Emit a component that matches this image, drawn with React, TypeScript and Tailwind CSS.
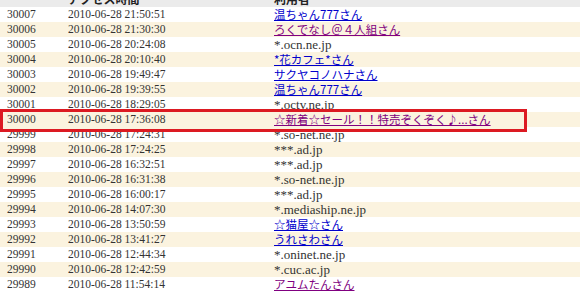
const rows: { id: string; at: string; who: string; link?: "new" | "seen" }[] = [
  { id: "30007", at: "2010-06-28 21:50:51", who: "温ちゃん777さん", link: "new" },
  { id: "30006", at: "2010-06-28 21:30:30", who: "ろくでなし＠４人組さん", link: "seen" },
  { id: "30005", at: "2010-06-28 20:24:08", who: "*.ocn.ne.jp" },
  { id: "30004", at: "2010-06-28 20:10:40", who: "*花カフェ*さん", link: "new" },
  { id: "30003", at: "2010-06-28 19:49:47", who: "サクヤコノハナさん", link: "new" },
  { id: "30002", at: "2010-06-28 19:39:55", who: "温ちゃん777さん", link: "new" },
  { id: "30001", at: "2010-06-28 18:29:05", who: "*.octv.ne.jp" },
  { id: "30000", at: "2010-06-28 17:36:08", who: "☆新着☆セール！！特売ぞくぞく♪...さん", link: "seen" },
  { id: "29999", at: "2010-06-28 17:24:31", who: "*.so-net.ne.jp" },
  { id: "29998", at: "2010-06-28 17:24:25", who: "***.ad.jp" },
  { id: "29997", at: "2010-06-28 16:32:51", who: "***.ad.jp" },
  { id: "29996", at: "2010-06-28 16:31:38", who: "*.so-net.ne.jp" },
  { id: "29995", at: "2010-06-28 16:00:17", who: "***.ad.jp" },
  { id: "29994", at: "2010-06-28 14:07:30", who: "*.mediaship.ne.jp" },
  { id: "29993", at: "2010-06-28 13:50:59", who: "☆猫屋☆さん", link: "new" },
  { id: "29992", at: "2010-06-28 13:41:27", who: "うれさわさん", link: "new" },
  { id: "29991", at: "2010-06-28 12:44:34", who: "*.oninet.ne.jp" },
  { id: "29990", at: "2010-06-28 12:42:59", who: "*.cuc.ac.jp" },
  { id: "29989", at: "2010-06-28 11:54:14", who: "アユムたんさん", link: "seen" },
];

export default function App() {
  return (
    <div className="h-[294px] w-[580px] overflow-hidden bg-white font-['Liberation_Serif','Noto_Sans_CJK_JP',serif] text-[11.5px] text-[#333]">
      <div className="-mt-[8px] flex h-[15px] bg-[#ebebeb] font-['Noto_Sans_CJK_JP',sans-serif] text-[12px] font-bold leading-[14px] text-[#222]">
        <div className="w-[68px]" />
        <div className="w-[206px] whitespace-nowrap">アクセス時間</div>
        <div className="flex-1 whitespace-nowrap">利用者</div>
      </div>
      {rows.map((r, i) => {
        const marked = r.id === "30000";
        return (
          <div
            key={r.id}
            className={`flex h-[15px] leading-[15px] ${i % 2 ? "bg-[#fbf3df]" : "bg-white"} ${marked ? "relative z-10" : ""}`}
          >
            {marked && (
              <span className="absolute -top-[3px] -bottom-[5px] left-0 -z-10 w-[527px] border-[3px] border-[#dc1a22] bg-[#fbf3df]" />
            )}
            <div className="w-[68px] pl-[7px]">{r.id}</div>
            <div className="w-[206px] whitespace-nowrap">{r.at}</div>
            <div className="flex-1 whitespace-nowrap">
              {r.link ? (
                <a
                  href="#"
                  className={`font-['Noto_Sans_CJK_JP',sans-serif] text-[11.5px] underline ${r.link === "seen" ? "text-[#800080]" : "text-[#0000cc]"}`}
                >
                  {r.who}
                </a>
              ) : (
                <span className="text-[13px]">{r.who}</span>
              )}
            </div>
          </div>
        );
      })}
    </div>
  );
}
